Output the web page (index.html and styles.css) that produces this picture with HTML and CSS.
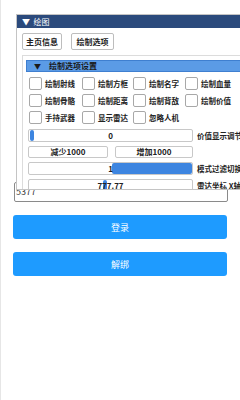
FILE: index.html
```html
<!DOCTYPE html>
<html>
<head>
<meta charset="utf-8">
<link rel="stylesheet" href="styles.css">
</head>
<body>
<div class="page">
  <div class="field">5377</div>
  <button class="btn">登录</button>
  <button class="btn">解绑</button>
</div>

<div class="win">
  <div class="title">▼&nbsp; 绘图</div>
  <div class="tabs">
    <div class="tab tab1">主页信息</div>
    <div class="tab tab2">绘制选项</div>
  </div>
  <div class="panel">
    <div class="header"><span class="arrow">▼</span>绘制选项设置</div>
    <div class="checks">
      <div class="chk"><span class="box"></span>绘制射线</div>
      <div class="chk"><span class="box"></span>绘制方框</div>
      <div class="chk"><span class="box"></span>绘制名字</div>
      <div class="chk"><span class="box"></span>绘制血量</div>
      <div class="chk"><span class="box"></span>绘制骨骼</div>
      <div class="chk"><span class="box"></span>绘制距离</div>
      <div class="chk"><span class="box"></span>绘制背敌</div>
      <div class="chk"><span class="box"></span>绘制价值</div>
      <div class="chk"><span class="box"></span>手持武器</div>
      <div class="chk"><span class="box"></span>显示雷达</div>
      <div class="chk"><span class="box"></span>忽略人机</div>
    </div>
    <div class="row">
      <div class="slider"><span class="grab grab-small" style="left:1px"></span><span class="val">0</span></div>
      <span class="lbl">价值显示调节</span>
    </div>
    <div class="row">
      <div class="pair">
        <div class="sbtn b1">减少1000</div>
        <div class="sbtn b2">增加1000</div>
      </div>
    </div>
    <div class="row">
      <div class="slider"><span class="grab grab-wide"></span><span class="val">1</span></div>
      <span class="lbl">模式过滤切换</span>
    </div>
    <div class="row">
      <div class="slider"><span class="grab grab-small" style="left:74px"></span><span class="val">777.77</span></div>
      <span class="lbl">雷达坐标 X轴</span>
    </div>
  </div>
</div>
</body>
</html>
```
FILE: styles.css
```css
html, body {
  margin: 0;
  padding: 0;
  width: 240px;
  height: 400px;
  overflow: hidden;
  background: #fff;
  font-family: "Noto Sans CJK SC", "Noto Sans", sans-serif;
  color: #222;
}
body {
  position: relative;
  border-left: 1px solid #e6e6e6;
  box-sizing: border-box;
}
.page {
  padding: 182px 12px 0 12px;
  display: flex;
  flex-direction: column;
}
.field {
  height: 18px;
  border: 1px solid #8a8a8a;
  border-radius: 2px;
  font-size: 9px;
  line-height: 18px;
  padding-left: 1px;
  color: #333;
  margin: 0 0 13px 1px;
  width: 211px;
  box-sizing: content-box;
}
.btn {
  height: 24px;
  border: none;
  border-radius: 3px;
  background: #1e9bff;
  color: #fff;
  font-family: inherit;
  font-size: 9px;
  margin: 0 0 13px 0;
  width: 214px;
  padding: 0;
}
.win {
  position: absolute;
  left: 15px;
  top: 14px;
  width: 240px;
  height: 176px;
  border: 1px solid #c4c4c4;
  background: #fff;
  overflow: hidden;
  box-sizing: border-box;
}
.title {
  height: 13px;
  background: #2b4a7c;
  color: #fff;
  font-size: 8px;
  line-height: 13px;
  padding-left: 5px;
}
.tabs {
  display: flex;
  gap: 9px;
  padding: 5px 0 0 5px;
}
.tab {
  height: 17px;
  border: 1px solid #bdbdbd;
  border-radius: 2px;
  font-size: 8px;
  font-weight: 700;
  line-height: 15px;
  text-align: center;
  box-sizing: border-box;
}
.tab1 { width: 40px; }
.tab2 { width: 43px; }
.panel {
  margin: 5px 0 0 5px;
  border: 1px solid #dcdcdc;
  border-right: none;
  padding: 4px 0 0 3px;
  display: flex;
  flex-direction: column;
  gap: 4px;
}
.header {
  height: 12px;
  background: #5b9be6;
  border: 1px solid #3f7fd0;
  box-sizing: border-box;
  font-size: 8px;
  line-height: 10px;
  font-weight: 700;
  color: #1a1a1a;
  display: flex;
  align-items: center;
}
.arrow {
  width: 22px;
  padding-left: 7px;
  box-sizing: border-box;
  font-size: 7px;
}
.checks {
  margin-top: 1px;
  padding-left: 3px;
  display: grid;
  grid-template-columns: 53px 51px 52px auto;
  row-gap: 4px;
  margin-bottom: 1px;
}
.chk {
  display: flex;
  align-items: center;
  gap: 3px;
  height: 13px;
  font-size: 7.5px;
  font-weight: 700;
}
.box {
  width: 13px;
  height: 13px;
  border: 1px solid #a8a8a8;
  border-radius: 2px;
  box-sizing: border-box;
  background: #fff;
  flex: none;
}
.row {
  display: flex;
  align-items: center;
  gap: 4px;
  padding-left: 2px;
}
.slider {
  position: relative;
  width: 165px;
  height: 13px;
  border: 1px solid #c8c8c8;
  border-radius: 2px;
  box-sizing: border-box;
  background: #fff;
  flex: none;
}
.val {
  position: absolute;
  left: 0;
  right: 0;
  top: 0;
  text-align: center;
  font-size: 8px;
  line-height: 11px;
  font-weight: 700;
}
.grab {
  position: absolute;
  top: 0;
  height: 11px;
  background: #3d85e0;
  border-radius: 2px;
}
.grab-small { width: 4px; }
.grab-wide { left: 83px; right: 0; }
.lbl {
  font-size: 7.5px;
  font-weight: 700;
  white-space: nowrap;
}
.pair {
  display: flex;
  gap: 7px;
}
.sbtn {
  height: 12px;
  border: 1px solid #c8c8c8;
  border-radius: 2px;
  box-sizing: border-box;
  font-size: 8px;
  font-weight: 700;
  line-height: 10px;
  text-align: center;
}
.b1 { width: 80px; }
.b2 { width: 78px; }
```
